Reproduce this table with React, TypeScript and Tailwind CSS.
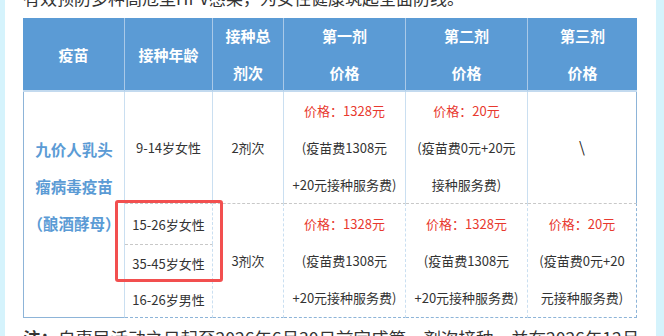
// HPV vaccine price table, 9-valent, with red highlight box
const font = { fontFamily: '"Noto Sans CJK SC", "Noto Sans", sans-serif' };

const head = 'flex flex-col items-center justify-center text-center text-white font-bold text-[15px] leading-[37px] bg-[#5b9bd5] border-b-2 border-b-[#c3daef]';
const cell = 'flex flex-col items-center justify-center text-center text-[13px] leading-[37px] text-[#333] border-r border-r-[#cadff1]';

function Price({ price, lines }: { price: string; lines: string[] }) {
  return (
    <>
      <span className="text-[#e8392f]">价格：{price}</span>
      {lines.map((l, i) => (
        <span key={i}>{l}</span>
      ))}
    </>
  );
}

export default function App() {
  return (
    <div className="w-[664px] h-[336px] overflow-hidden bg-[#d5f3fc] flex" style={font}>
      <div className="ml-[5px] w-[651px] h-full bg-white overflow-hidden flex flex-col px-[18px]">
        <div className="h-[18px] shrink-0 overflow-hidden">
          <p className="-mt-[14px] text-[17px] leading-[24px] text-[#333] whitespace-nowrap">
            有效预防多种高危型HPV感染，为女性健康筑起全面防线。
          </p>
        </div>

        <div className="relative w-[614px] shrink-0">
          <div className="grid grid-cols-[102px_88px_71px_122px_122px_109px] grid-rows-[74px_111px_41px_37px_37px]">
            {/* header */}
            <div className={`${head} border-r border-r-[#a9c9e8]`}>疫苗</div>
            <div className={`${head} border-r border-r-[#a9c9e8]`}>接种年龄</div>
            <div className={`${head} border-r border-r-[#a9c9e8]`}>
              <span>接种总</span>
              <span>剂次</span>
            </div>
            <div className={`${head} border-r border-r-[#a9c9e8]`}>
              <span>第一剂</span>
              <span>价格</span>
            </div>
            <div className={`${head} border-r border-r-[#a9c9e8]`}>
              <span>第二剂</span>
              <span>价格</span>
            </div>
            <div className={head}>
              <span>第三剂</span>
              <span>价格</span>
            </div>

            {/* vaccine name */}
            <div className="col-start-1 row-start-2 row-span-4 flex flex-col items-center justify-center pb-[36px] text-[15.5px] leading-[37px] font-bold text-[#5b9bd5] border-l border-l-[#8db4d8] border-r border-r-[#cadff1] border-b border-b-[#8db4d8]">
              <span>九价人乳头</span>
              <span>瘤病毒疫苗</span>
              <span>（酿酒酵母）</span>
            </div>

            {/* row 1 */}
            <div className={`${cell} col-start-2 row-start-2`}>9-14岁女性</div>
            <div className={`${cell} col-start-3 row-start-2`}>2剂次</div>
            <div className={`${cell} col-start-4 row-start-2`}>
              <Price price="1328元" lines={['(疫苗费1308元', '+20元接种服务费)']} />
            </div>
            <div className={`${cell} col-start-5 row-start-2`}>
              <Price price="20元" lines={['(疫苗费0元+20元', '接种服务费)']} />
            </div>
            <div className="col-start-6 row-start-2 flex items-center justify-center text-[15px] text-[#222] border-r border-r-[#8db4d8]">
              \
            </div>

            {/* row 2 group */}
            <div className={`${cell} col-start-2 row-start-3 border-t border-dashed border-t-[#c8c8c8]`}>15-26岁女性</div>
            <div className={`${cell} col-start-2 row-start-4 border-t border-dashed border-t-[#c8c8c8]`}>35-45岁女性</div>
            <div className={`${cell} col-start-2 row-start-5 border-t border-dashed border-t-[#c8c8c8] border-b border-b-[#8db4d8]`}>16-26岁男性</div>
            <div className={`${cell} col-start-3 row-start-3 row-span-3 border-t border-dashed border-t-[#c8c8c8] border-b border-b-[#8db4d8]`}>3剂次</div>
            <div className={`${cell} col-start-4 row-start-3 row-span-3 border-t border-dashed border-t-[#c8c8c8] border-b border-b-[#8db4d8]`}>
              <Price price="1328元" lines={['(疫苗费1308元', '+20元接种服务费)']} />
            </div>
            <div className={`${cell} col-start-5 row-start-3 row-span-3 border-t border-dashed border-t-[#c8c8c8] border-b border-b-[#8db4d8]`}>
              <Price price="1328元" lines={['(疫苗费1308元', '+20元接种服务费)']} />
            </div>
            <div className="col-start-6 row-start-3 row-span-3 flex flex-col items-center justify-center text-center text-[13px] leading-[37px] text-[#333] border-t border-dashed border-t-[#c8c8c8] border-r border-r-[#8db4d8] border-b border-b-[#8db4d8]">
              <Price price="20元" lines={['(疫苗费0元+20', '元接种服务费)']} />
            </div>
          </div>

          {/* highlight box */}
          <div className="absolute left-[92px] top-[182px] w-[108px] h-[82px] border-[3px] border-[#f24f4f] rounded-[3px]" />
        </div>

        <p className="shrink-0 mt-[8px] text-[17.5px] leading-[24px] text-[#333] whitespace-nowrap">
          <span className="font-bold">注：</span>自惠民活动之日起至2026年6月30日前完成第一剂次接种，并在2026年12月
        </p>
      </div>
    </div>
  );
}
